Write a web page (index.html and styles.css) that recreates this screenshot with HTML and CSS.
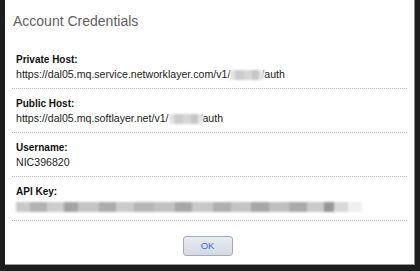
FILE: index.html
```html
<!DOCTYPE html>
<html>
<head>
<meta charset="utf-8">
<link rel="stylesheet" href="styles.css">
</head>
<body>
<div class="dialog">
  <div class="header">Account Credentials</div>
  <div class="fields">
    <div class="field">
      <div class="label">Private Host:</div>
      <div class="value">https://dal05.mq.service.networklayer.com/v1/<span class="blur blur-acct"></span>/auth</div>
    </div>
    <div class="field">
      <div class="label">Public Host:</div>
      <div class="value">https://dal05.mq.softlayer.net/v1/<span class="blur blur-acct"></span>/auth</div>
    </div>
    <div class="field">
      <div class="label">Username:</div>
      <div class="value">NIC396820</div>
    </div>
    <div class="field">
      <div class="label">API Key:</div>
      <div class="value"><span class="blur blur-key"></span></div>
    </div>
  </div>
  <div class="footer">
    <button class="ok">OK</button>
  </div>
</div>
</body>
</html>
```
FILE: styles.css
```css
html, body {
  margin: 0;
  padding: 0;
}
body {
  background: #1d1d1d;
  width: 420px;
  height: 271px;
  overflow: hidden;
  font-family: "Liberation Sans", Arial, sans-serif;
}
.dialog {
  margin-left: 5px;
  width: 409px;
  height: 264px;
  background: #fff;
  border-right: 1px solid #8a8a8a;
  border-bottom: 1px solid #9a9a9a;
  display: flex;
  flex-direction: column;
  box-sizing: content-box;
}
.header {
  padding: 11px 8px 14px;
  font-size: 14px;
  line-height: 20px;
  color: #5e5e5e;
}
.fields {
  margin: 0 7px;
  display: flex;
  flex-direction: column;
}
.field {
  padding: 8px 4px 7px;
  border-bottom: 1px dotted #b8b8b8;
}
.label {
  font-size: 10px;
  font-weight: bold;
  line-height: 14px;
  color: #111;
}
.value {
  font-size: 10.6px;
  line-height: 14px;
  color: #222;
  white-space: nowrap;
}
.blur {
  display: inline-block;
  vertical-align: -2px;
  height: 10px;
  filter: blur(1.2px);
}
.blur-acct {
  width: 34px;
  margin-right: -3px;
  position: relative;
  background: linear-gradient(90deg, #e4e4e4 0 15%, #cccccc 15% 40%, #d6d6d6 40% 65%, #c6c6c6 65% 85%, #e6e6e6 85%);
}
.blur-key {
  width: 346px;
  background: linear-gradient(90deg,
    #c9c9c9 0 4%, #b3b3b3 4% 9%, #cdcdcd 9% 14%, #a3a3a3 14% 18%, #c4c4c4 18% 24%,
    #acacac 24% 29%, #cbcbcb 29% 34%, #b6b6b6 34% 40%, #c1c1c1 40% 46%, #a7a7a7 46% 51%,
    #c8c8c8 51% 57%, #afafaf 57% 62%, #c4c4c4 62% 68%, #a8a8a8 68% 73%, #bfbfbf 73% 79%,
    #aaaaaa 79% 84%, #cacaca 84% 89%, #989898 89% 92%, #d8d8d8 92% 96%, #f0f0f0 96%);
}
.footer {
  display: flex;
  justify-content: center;
  padding: 15px 4px 0 0;
}
.ok {
  width: 50px;
  height: 20px;
  padding: 0;
  border: 1px solid #a3acb9;
  border-radius: 3px;
  background: linear-gradient(#e8ecf2, #d3d9e3);
  color: #3d6fc6;
  font-family: "Liberation Sans", Arial, sans-serif;
  font-size: 9.5px;
  line-height: 18px;
}
```
